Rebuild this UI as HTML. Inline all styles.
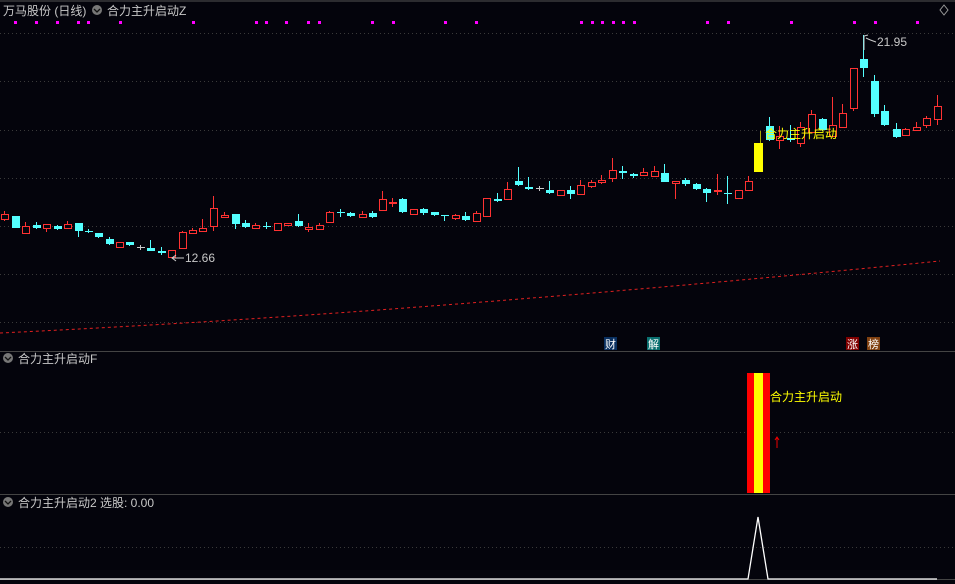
<!DOCTYPE html>
<html><head><meta charset="utf-8"><style>
body{margin:0;background:#04040c;width:955px;height:584px;overflow:hidden;font-family:"Liberation Sans","Noto Sans CJK SC",sans-serif}
svg{position:absolute;left:0;top:0}
</style></head><body>
<svg id="s" width="955" height="584" xmlns="http://www.w3.org/2000/svg">
<rect width="955" height="584" fill="#04040c"/>
<line x1="0" y1="1" x2="955" y2="1" stroke="#555" stroke-width="1"/>
<g stroke="#3a3a3a" stroke-dasharray="1,3">
<line x1="0" y1="33.5" x2="955" y2="33.5"/><line x1="0" y1="81.5" x2="955" y2="81.5"/>
<line x1="0" y1="130.5" x2="955" y2="130.5"/><line x1="0" y1="178.5" x2="955" y2="178.5"/>
<line x1="0" y1="226.5" x2="955" y2="226.5"/><line x1="0" y1="274.5" x2="955" y2="274.5"/>
<line x1="0" y1="322.5" x2="955" y2="322.5"/><line x1="0" y1="432.5" x2="955" y2="432.5"/>
<line x1="0" y1="547.5" x2="955" y2="547.5"/>
</g>
<line x1="0" y1="351.5" x2="955" y2="351.5" stroke="#444"/>
<line x1="0" y1="494.5" x2="955" y2="494.5" stroke="#444"/>
<line x1="0" y1="579.5" x2="955" y2="579.5" stroke="#444"/>
<path d="M0,333 Q230,322 470,303 T940,261" fill="none" stroke="#e02020" stroke-dasharray="3,3"/>
<g id="c"></g>
<g font-size="12" fill="#c8c8c8">
<text x="3" y="15">万马股份 (日线)</text>
<circle cx="97" cy="10" r="5" fill="#777"/><path d="M94,9 L97,12 L100,9" stroke="#111" fill="none" stroke-width="1.3"/>
<text x="107" y="15">合力主升启动Z</text>
<circle cx="8" cy="358" r="5" fill="#777"/><path d="M5,357 L8,360 L11,357" stroke="#111" fill="none" stroke-width="1.3"/>
<text x="18" y="363">合力主升启动F</text>
<circle cx="8" cy="502" r="5" fill="#777"/><path d="M5,501 L8,504 L11,501" stroke="#111" fill="none" stroke-width="1.3"/>
<text x="18" y="507">合力主升启动2 选股: 0.00</text>
<text x="877" y="46">21.95</text>
<text x="185" y="262">12.66</text>
</g>
<path d="M944,5 L948,10 L944,15 L940,10Z" fill="none" stroke="#999"/>
<path d="M864,50 V36 L868,35 M866,38 Q870,40 876,42" stroke="#ccc" fill="none"/>
<path d="M172,258 H184 M176,255 L172,258 L176,261" stroke="#ccc" fill="none"/>
<text x="765" y="138" font-size="12" fill="#ffff00">合力主升启动</text>
<rect x="604" y="337" width="13" height="13" fill="#0a3060"/><text x="605" y="348" font-size="11" fill="#fff">财</text>
<rect x="647" y="337" width="13" height="13" fill="#0a7070"/><text x="648" y="348" font-size="11" fill="#fff">解</text>
<rect x="846" y="337" width="13" height="13" fill="#800000"/><text x="847" y="348" font-size="11" fill="#fff">涨</text>
<rect x="867" y="337" width="13" height="13" fill="#804010"/><text x="868" y="348" font-size="11" fill="#fff">榜</text>
<rect x="747" y="373" width="23" height="120" fill="#ff0000"/>
<rect x="754" y="373" width="9" height="120" fill="#ffff00"/>
<text x="770" y="401" font-size="12" fill="#ffff00">合力主升启动</text>
<path d="M777,448 V437 M775,440 L777,437 L779,440" stroke="#e00" fill="none"/>
<polyline points="0,579 748,579 758,517 768,579 937,579" fill="none" stroke="#fff" stroke-width="1.3"/>
</svg>
<script>
var d=[
[4,'r',214,219,211,221],[15,'c',216,228,216,228],[25,'r',226,233,222,233],[36,'c',225,228,222,229],[46,'r',224,228,224,232],[57,'c',226,229,225,230],[67,'r',224,228,221,228],[78,'c',223,231,223,237],[88,'c',231,232,229,233],[98,'c',233,237,233,238],[109,'c',239,244,237,245],[119,'r',242,247,242,247],[129,'c',242,245,242,246],[140,'g',247,248,245,250],[150,'c',248,251,240,251],[161,'c',251,253,247,255],[171,'r',250,257,250,258],[182,'r',232,248,231,248],[192,'r',230,233,228,234],[202,'r',228,231,219,231],[213,'r',208,226,196,231],[224,'r',215,217,212,217],[235,'c',214,224,214,229],[245,'c',223,227,220,228],[255,'r',225,228,223,229],[266,'c',226,227,222,229],[277,'r',223,230,223,230],[287,'r',223,225,223,226],[298,'c',221,226,214,227],[308,'r',227,229,223,232],[319,'r',225,229,223,230],[329,'r',212,222,211,222],[340,'c',212,213,209,217],[350,'c',213,216,212,217],[362,'r',214,217,211,218],[372,'c',213,217,211,218],[382,'r',199,210,191,210],[392,'r',202,203,198,207],[402,'c',199,212,198,213],[413,'r',209,214,209,214],[423,'c',209,213,208,215],[434,'c',212,215,212,216],[444,'c',215,216,215,221],[455,'r',215,218,214,220],[465,'c',216,220,212,221],[476,'r',213,221,211,222],[486,'r',198,216,198,216],[497,'c',199,201,193,202],[507,'r',189,199,182,199],[518,'c',181,185,167,186],[528,'c',187,189,177,190],[539,'g',188,189,186,191],[549,'c',190,193,181,194],[560,'r',190,195,190,196],[570,'c',190,194,186,199],[580,'r',185,194,180,194],[591,'r',182,186,180,188],[601,'r',180,182,175,184],[612,'r',170,178,158,182],[622,'c',171,173,166,179],[633,'c',174,176,173,178],[643,'r',172,175,168,176],[654,'r',171,176,166,176],[664,'c',173,182,164,182],[675,'r',181,183,181,199],[685,'c',180,184,178,186],[696,'c',184,189,183,190],[706,'c',189,193,188,202],[717,'r',190,191,174,195],[727,'c',193,194,176,204],[738,'r',190,198,190,199],[748,'r',181,190,176,190],[769,'c',126,140,117,141],[779,'r',136,140,126,149],[790,'c',138,140,125,142],[800,'r',127,143,122,147],[811,'r',114,132,110,132],[822,'c',119,130,118,131],[832,'r',125,136,97,136],[842,'r',113,127,104,127],[853,'r',68,108,68,111],[863,'c',59,68,35,77],[874,'c',81,114,75,117],[884,'c',111,125,105,126],[896,'c',129,137,123,138],[905,'r',129,135,128,136],[916,'r',127,130,122,131],[926,'r',118,125,116,128],[937,'r',106,119,95,125]];
var s='';
d.forEach(function(a){var x=a[0],col=a[1]=='r'?'#ff3232':a[1]=='g'?'#c8c8c8':'#54ffff';
s+='<line x1="'+(x+.5)+'" y1="'+a[4]+'" x2="'+(x+.5)+'" y2="'+a[5]+'" stroke="'+col+'"/>';
var h=Math.max(a[3]-a[2],1);
if(a[1]=='r')s+='<rect x="'+(x-3)+'.5" y="'+(a[2]+.5)+'" width="7" height="'+h+'" fill="#04040c" stroke="'+col+'"/>';
else s+='<rect x="'+(x-3)+'" y="'+a[2]+'" width="8" height="'+h+'" fill="'+col+'"/>';});
s+='<rect x="754" y="143" width="9" height="29" fill="#ffff00"/><line x1="760.5" y1="131" x2="760.5" y2="143" stroke="#aa0"/>';
var m=[14,35,56,77,87,119,192,255,265,285,307,318,371,392,444,475,580,591,601,612,622,633,706,727,790,853,874,916];
m.forEach(function(x){s+='<rect x="'+x+'" y="21" width="3" height="3" fill="#ff00ff"/>'});
document.getElementById('c').innerHTML=s;
</script>
</body></html>
